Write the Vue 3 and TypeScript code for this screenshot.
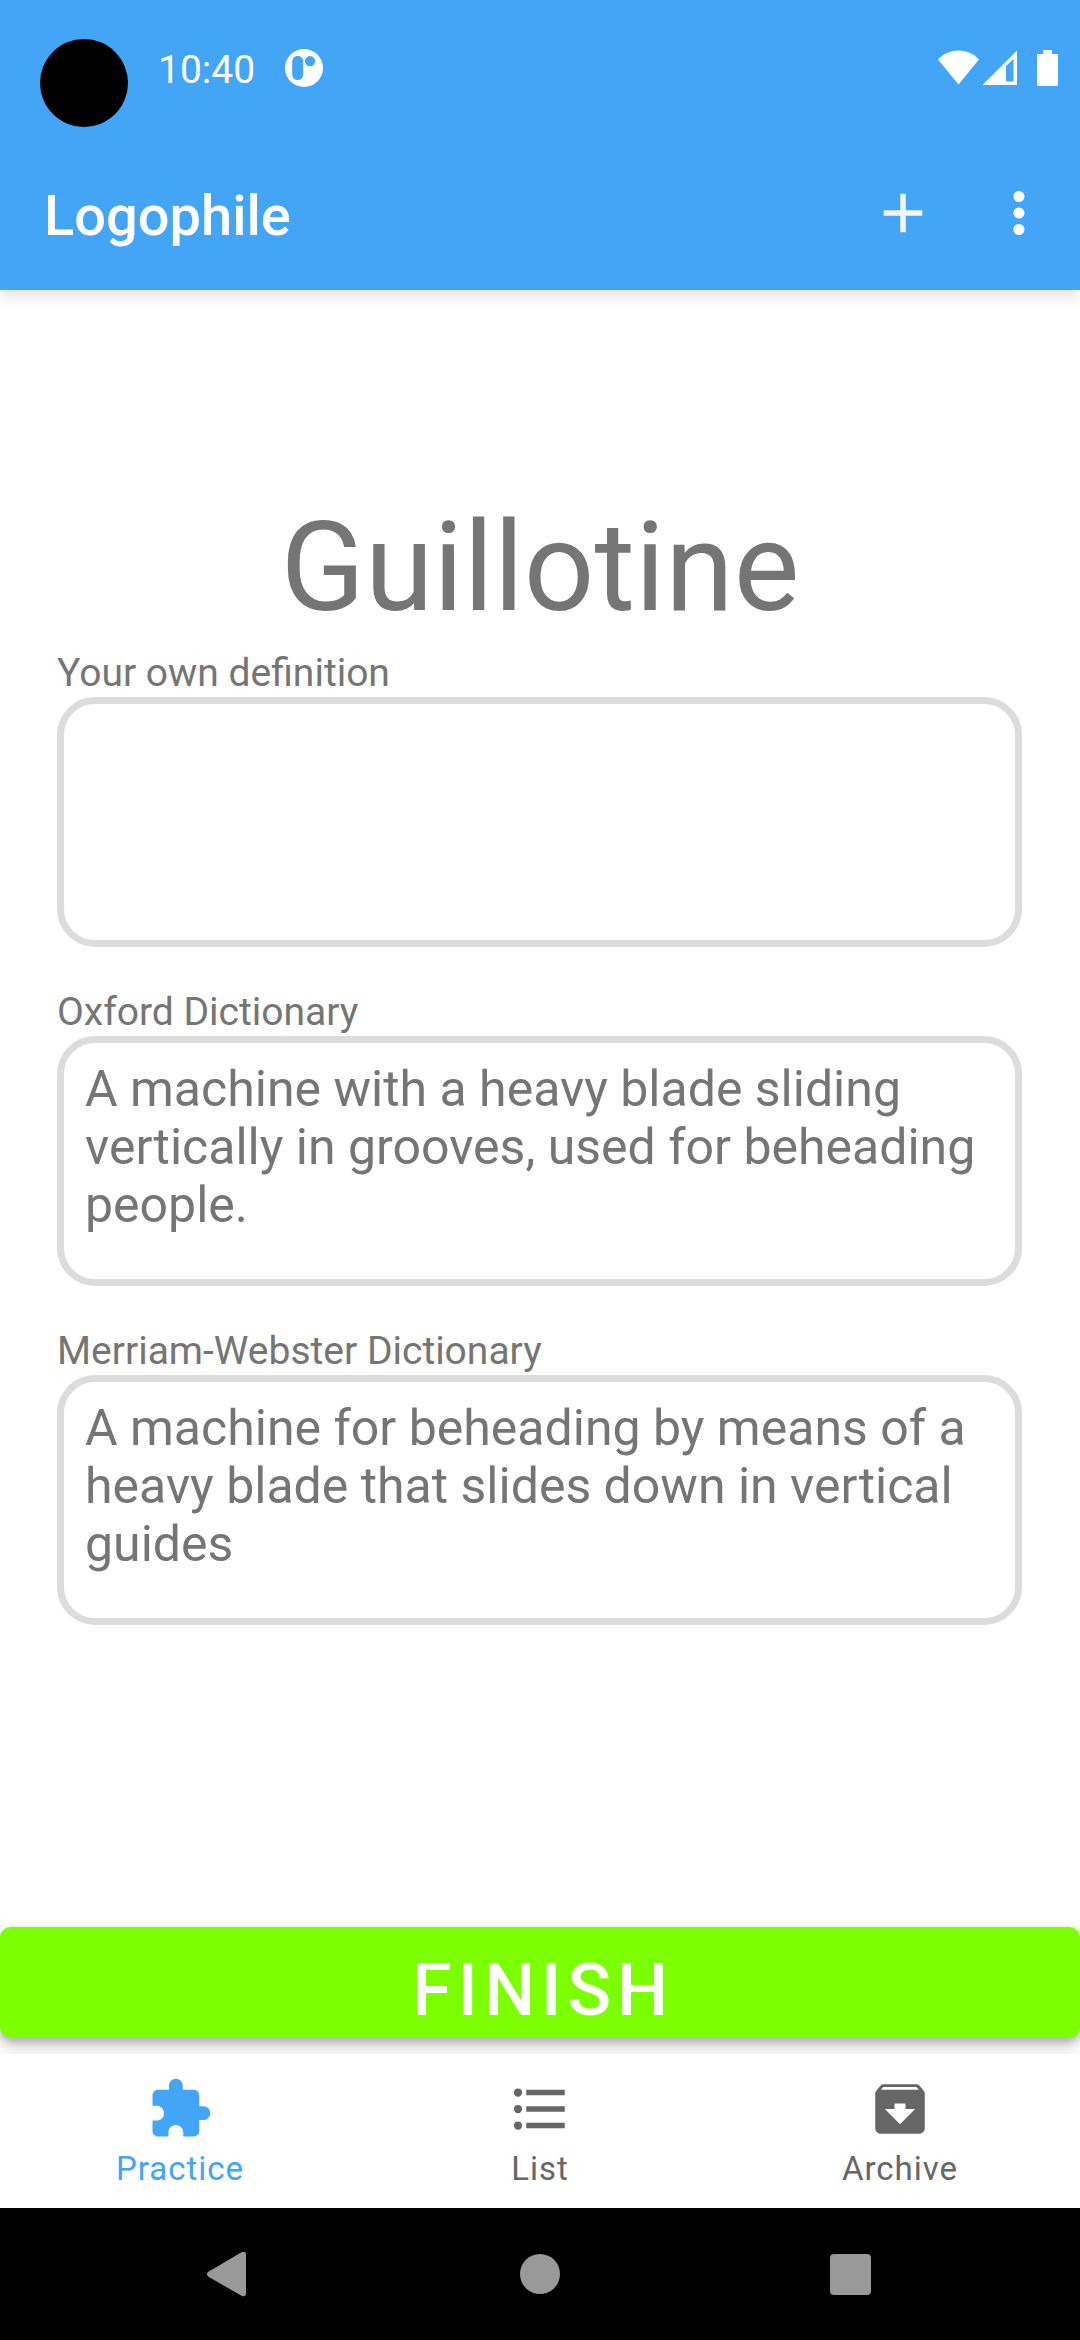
<script setup lang="ts">
import { ref } from 'vue'

interface Definition {
  source: string
  text: string
}

interface Tab {
  name: string
  icon: string
}

const word = 'Guillotine'
const ownDefinition = ref('')
const activeTab = ref('Practice')

const definitions: Definition[] = [
  {
    source: 'Oxford Dictionary',
    text: 'A machine with a heavy blade sliding vertically in grooves, used for beheading people.',
  },
  {
    source: 'Merriam-Webster Dictionary',
    text: 'A machine for beheading by means of a heavy blade that slides down in vertical guides',
  },
]

const tabs: Tab[] = [
  {
    name: 'Practice',
    icon: 'M20.5 11H19V7c0-1.1-.9-2-2-2h-4V3.5C13 2.12 11.88 1 10.5 1S8 2.12 8 3.5V5H4c-1.1 0-1.99.9-1.99 2v3.8H3.5c1.49 0 2.7 1.21 2.7 2.7s-1.21 2.7-2.7 2.7H2V20c0 1.1.9 2 2 2h3.8v-1.5c0-1.49 1.21-2.7 2.7-2.7 1.49 0 2.7 1.21 2.7 2.7V22H17c1.1 0 2-.9 2-2v-4h1.5c1.38 0 2.5-1.12 2.5-2.5S21.88 11 20.5 11z',
  },
  {
    name: 'List',
    icon: 'M4 10.5a1.5 1.5 0 1 0 0 3 1.5 1.5 0 0 0 0-3zm0-6a1.5 1.5 0 1 0 0 3 1.5 1.5 0 0 0 0-3zm0 12a1.5 1.5 0 1 0 0 3 1.5 1.5 0 0 0 0-3zM7 19h14v-2H7v2zm0-6h14v-2H7v2zm0-8v2h14V5H7z',
  },
  {
    name: 'Archive',
    icon: 'M20.54 5.23l-1.39-1.68C18.88 3.21 18.47 3 18 3H6c-.47 0-.88.21-1.16.55L3.46 5.23C3.17 5.57 3 6.02 3 6.5V19c0 1.1.9 2 2 2h14c1.1 0 2-.9 2-2V6.5c0-.48-.17-.93-.46-1.27zM12 17.5L6.5 12H10v-2h4v2h3.5L12 17.5zM5.12 5l.81-1h12l.94 1H5.12z',
  },
]
</script>

<template>
  <div class="screen">
    <header class="top">
      <div class="status">
        <span class="camera"></span>
        <time class="clock">10:40</time>
        <svg class="notice" viewBox="0 0 38 38" aria-hidden="true">
          <path
            fill="#fff"
            fill-rule="evenodd"
            d="M19 0a19 19 0 1 0 0 38a19 19 0 0 0 0-38zM12.7 6.8a5.5 5.5 0 0 1 5.5 5.5v13.2a5.5 5.5 0 0 1-11 0V12.3a5.5 5.5 0 0 1 5.5-5.5zM25 6.9a5.2 5.2 0 1 1 0 10.4a5.2 5.2 0 0 1 0-10.4z"
          />
        </svg>
        <svg class="signals" viewBox="0 0 122 38" aria-hidden="true">
          <g fill="#fff">
            <path d="M0 9.5C11-2.500 30-2.500 41 9.5L20.5 34.5z" />
            <path fill-rule="evenodd" d="M44.500 35L79 0.500V35zM68 16V31.500H75.500V9z" />
            <path d="M105 0h9v4h4.500a1.500 1.500 0 0 1 1.500 1.500v29a1.500 1.500 0 0 1-1.500 1.500h-18a1.500 1.500 0 0 1-1.500-1.500v-29a1.500 1.500 0 0 1 1.500-1.500h4.500z" />
          </g>
        </svg>
      </div>
      <div class="bar">
        <span class="app-name">Logophile</span>
        <button class="action" type="button" aria-label="Add word">
          <svg class="icon" viewBox="0 0 24 24"><path fill="#f5f5f5" d="M19 13h-6v6h-2v-6H5v-2h6V5h2v6h6v2z" /></svg>
        </button>
        <button class="action" type="button" aria-label="More options">
          <svg class="icon" viewBox="0 0 24 24">
            <g fill="#fff">
              <circle cx="12" cy="6" r="2" />
              <circle cx="12" cy="12" r="2" />
              <circle cx="12" cy="18" r="2" />
            </g>
          </svg>
        </button>
      </div>
    </header>

    <main class="content">
      <h1 class="word">{{ word }}</h1>
      <div class="fields">
        <div class="field">
          <label class="caption" for="own-definition">Your own definition</label>
          <textarea id="own-definition" v-model="ownDefinition" class="box"></textarea>
        </div>
        <section v-for="item in definitions" :key="item.source" class="field">
          <h2 class="caption">{{ item.source }}</h2>
          <p class="box">{{ item.text }}</p>
        </section>
      </div>
      <button class="finish" type="button">FINISH</button>
    </main>

    <nav class="tabs">
      <button
        v-for="tab in tabs"
        :key="tab.name"
        type="button"
        class="tab"
        :class="{ active: tab.name === activeTab }"
        @click="activeTab = tab.name"
      >
        <svg class="icon" viewBox="0 0 24 24" aria-hidden="true"><path fill="currentColor" :d="tab.icon" /></svg>
        <span>{{ tab.name }}</span>
      </button>
    </nav>

    <div class="system">
      <button type="button" class="key" aria-label="Back">
        <svg class="icon" viewBox="0 0 66 66">
          <path fill="#999" d="M14 31L47.5 11.2Q51.5 9.5 52 13V53Q51.5 56.5 47.5 54.8L14 35.5Q12 33.3 14 31z" />
        </svg>
      </button>
      <button type="button" class="key" aria-label="Home">
        <svg class="icon" viewBox="0 0 66 66"><circle fill="#999" cx="33" cy="33" r="20" /></svg>
      </button>
      <button type="button" class="key" aria-label="Recent apps">
        <svg class="icon" viewBox="0 0 66 66"><rect fill="#999" x="10" y="13" width="41" height="41" rx="4" /></svg>
      </button>
    </div>
  </div>
</template>

<style>
body {
  margin: 0;
  background: #fff;
}
</style>

<style scoped>
.screen {
  display: flex;
  flex-direction: column;
  min-height: 100vh;
  font-family: Roboto, 'Liberation Sans', sans-serif;
  color: #757575;
}

button {
  margin: 0;
  padding: 0;
  border: 0;
  background: none;
  font-family: inherit;
  color: inherit;
}

.icon {
  display: block;
  width: 66px;
  height: 66px;
}

.top {
  position: relative;
  background: #42a5f5;
  color: #fff;
  box-shadow: 0 4px 16px rgba(0, 0, 0, 0.14);
}

.status {
  display: flex;
  align-items: flex-start;
  height: 97px;
  padding: 39px 20px 0 40px;
}

.camera {
  width: 88px;
  height: 88px;
  border-radius: 50%;
  background: #000;
}

.clock {
  margin-left: 30px;
  padding-top: 8px;
  font-size: 39px;
  line-height: 46px;
}

.notice {
  width: 38px;
  height: 38px;
  margin: 10px 0 0 30px;
}

.signals {
  width: 122px;
  height: 38px;
  margin: 11px 0 0 auto;
}

.bar {
  display: flex;
  align-items: center;
  height: 154px;
  padding: 0 28px 0 44px;
}

.app-name {
  flex: 1;
  padding-top: 5px;
  font-size: 56px;
  font-weight: 500;
  line-height: 64px;
}

.action + .action {
  margin-left: 50px;
}

.content {
  flex: 1;
  display: flex;
  flex-direction: column;
  padding: 205px 0 16px;
}

.word {
  margin: 0 0 8px;
  font-size: 124px;
  font-weight: 400;
  line-height: 146px;
  text-align: center;
}

.fields {
  display: flex;
  flex-direction: column;
  gap: 41px;
  padding: 0 58px 0 57px;
}

.caption {
  display: block;
  margin: 0;
  font-size: 39px;
  font-weight: 400;
  line-height: 48px;
}

.box {
  display: block;
  box-sizing: border-box;
  width: 100%;
  min-height: 250px;
  margin: 0;
  padding: 17px 21px;
  border: 7px solid #dcdcdc;
  border-radius: 38px;
  background: #fff;
  outline: none;
  resize: none;
  font-family: inherit;
  font-size: 50px;
  line-height: 58px;
  color: inherit;
}

.finish {
  box-sizing: border-box;
  width: 100%;
  height: 111px;
  margin-top: auto;
  padding: 16px 0 0 6px;
  border-radius: 11px;
  background: #7cff00;
  color: #fff;
  font-size: 72px;
  font-weight: 500;
  line-height: 84px;
  letter-spacing: 6px;
  box-shadow: 0 5px 12px rgba(0, 0, 0, 0.35);
}

.tabs {
  position: relative;
  display: flex;
  height: 154px;
  background: #fff;
  box-shadow: 0 0 16px rgba(0, 0, 0, 0.08);
}

.tab {
  flex: 1;
  display: flex;
  flex-direction: column;
  align-items: center;
  gap: 7px;
  padding-top: 22px;
  color: #666;
  font-size: 33px;
  line-height: 39px;
  letter-spacing: 1px;
}

.tab.active {
  color: #42a5f5;
}

.system {
  position: relative;
  display: flex;
  height: 132px;
  padding: 0 70px;
  background: #000;
}

.key {
  flex: 1;
  display: flex;
  align-items: center;
  justify-content: center;
}
</style>
